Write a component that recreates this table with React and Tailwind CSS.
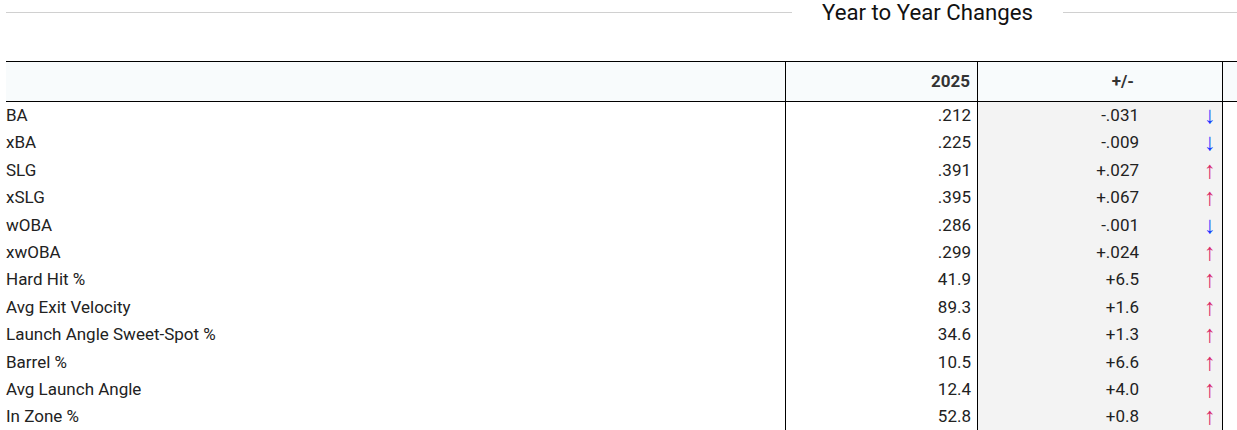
import React from 'react';

const rows = [
  { label: 'BA', value: '.212', diff: '-.031', up: false },
  { label: 'xBA', value: '.225', diff: '-.009', up: false },
  { label: 'SLG', value: '.391', diff: '+.027', up: true },
  { label: 'xSLG', value: '.395', diff: '+.067', up: true },
  { label: 'wOBA', value: '.286', diff: '-.001', up: false },
  { label: 'xwOBA', value: '.299', diff: '+.024', up: true },
  { label: 'Hard Hit %', value: '41.9', diff: '+6.5', up: true },
  { label: 'Avg Exit Velocity', value: '89.3', diff: '+1.6', up: true },
  { label: 'Launch Angle Sweet-Spot %', value: '34.6', diff: '+1.3', up: true },
  { label: 'Barrel %', value: '10.5', diff: '+6.6', up: true },
  { label: 'Avg Launch Angle', value: '12.4', diff: '+4.0', up: true },
  { label: 'In Zone %', value: '52.8', diff: '+0.8', up: true },
];

const App = () => {
  return (
    <div className="w-[1237px] h-[430px] overflow-hidden bg-white font-['Roboto',sans-serif] text-[#222]">
      <div className="w-[1843px] ml-[6px]">
        <div className="flex items-center h-[24px]">
          <div className="flex-1 border-t border-[#d0d0d0]" />
          <h2 className="px-[30px] text-[22.2px] leading-[24px] text-[#111] font-normal">Year to Year Changes</h2>
          <div className="flex-1 border-t border-[#d0d0d0]" />
        </div>

        <div className="mt-[37px] border-t border-black">
          <div className="grid grid-cols-[779px_192px_245px_1fr] h-[40px] bg-[#f8fbfc] border-b border-black font-bold text-[17px] text-[#333]">
            <div />
            <div className="border-l border-black flex items-center justify-end pr-[7px]">2025</div>
            <div className="border-l border-black flex items-center justify-end pr-[88px]">+/-</div>
            <div className="border-l border-black" />
          </div>
          {rows.map((r) => (
            <div key={r.label} className="grid grid-cols-[779px_192px_245px_1fr] h-[27.4px] text-[17px] leading-[27.4px]">
              <div>{r.label}</div>
              <div className="border-l border-black text-right pr-[6px]">{r.value}</div>
              <div className="border-l border-black bg-[#f3f3f3] flex">
                <span className="w-[161px] text-right">{r.diff}</span>
                <span className={`ml-[65px] text-[24px] leading-[27.4px] ${r.up ? 'text-[#d8266a]' : 'text-[#1a3cff]'}`}>
                  {r.up ? '↑' : '↓'}
                </span>
              </div>
              <div className="border-l border-black" />
            </div>
          ))}
        </div>
      </div>
    </div>
  );
};

export default App;
